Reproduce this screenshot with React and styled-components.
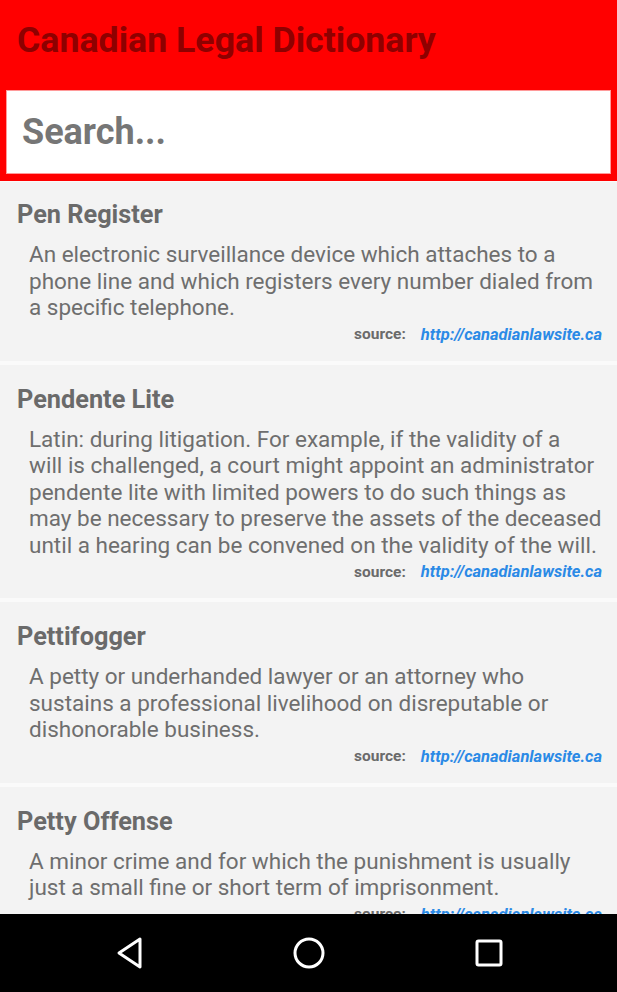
import React from 'react'
import styled, { createGlobalStyle } from 'styled-components'

const Global = createGlobalStyle`
  html, body {
    margin: 0;
    padding: 0;
    background: #fafafa;
    font-family: Roboto, "Noto Sans", "Liberation Sans", sans-serif;
  }
`

const Screen = styled.div`
  width: 617px;
  height: 992px;
  display: flex;
  flex-direction: column;
  overflow: hidden;
  background: #fafafa;
`

const Header = styled.header`
  background: #ff0000;
  padding: 0 6px 7px;
  flex: none;
`

const Title = styled.h1`
  margin: 0;
  height: 90px;
  padding: 0 0 10px 11px;
  box-sizing: border-box;
  display: flex;
  align-items: center;
  font-size: 35.7px;
  font-weight: 700;
  color: #8e0000;
`

const SearchBox = styled.div`
  height: 82px;
  background: #fff;
  border: 1px solid #ff9a9a;
  display: flex;
  align-items: center;
  padding-left: 15px;
  font-size: 36px;
  font-weight: 700;
  color: #767676;
`

const List = styled.main`
  flex: 1;
  overflow: hidden;
  display: flex;
  flex-direction: column;
  gap: 4px;
  padding-top: 1px;
`

const Card = styled.section`
  background: #f3f3f3;
  padding: 21px 14px 13px 17px;
  flex: none;

  &:first-child {
    padding-top: 19px;
  }
`

const Term = styled.h2`
  margin: 0 0 12px;
  font-size: 25.3px;
  line-height: 28px;
  font-weight: 700;
  color: #6a6a6a;
`

const Definition = styled.p`
  margin: 0 0 0 12px;
  font-size: 22.5px;
  line-height: 26.5px;
  color: #6e6e6e;
  white-space: pre-line;
`

const SourceRow = styled.div`
  display: flex;
  justify-content: flex-end;
  align-items: center;
  gap: 15px;
  height: 27px;
  padding-right: 1px;
  font-weight: 700;
`

const SourceLabel = styled.span`
  color: #6a6a6a;
  font-size: 15.5px;
`

const SourceLink = styled.a`
  color: #2b8ae6;
  font-size: 16.5px;
  font-style: italic;
  text-decoration: none;
`

const NavBar = styled.nav`
  flex: none;
  height: 78px;
  background: #000;
  display: grid;
  grid-template-columns: repeat(3, 50px);
  column-gap: 130px;
  justify-content: center;
  align-items: center;
  justify-items: center;
`

const entries = [
  {
    term: 'Pen Register',
    text: 'An electronic surveillance device which attaches to a phone line and which registers every number dialed from a specific telephone.',
  },
  {
    term: 'Pendente Lite',
    text: 'Latin: during litigation. For example, if the validity of a\nwill is challenged, a court might appoint an administrator pendente lite with limited powers to do such things as may be necessary to preserve the assets of the deceased until a hearing can be convened on the validity of the will.',
  },
  {
    term: 'Pettifogger',
    text: 'A petty or underhanded lawyer or an attorney who sustains a professional livelihood on disreputable or dishonorable business.',
  },
  {
    term: 'Petty Offense',
    text: 'A minor crime and for which the punishment is usually just a small fine or short term of imprisonment.',
  },
]

export default function App() {
  return (
    <>
      <Global />
      <Screen>
        <Header>
          <Title>Canadian Legal Dictionary</Title>
          <SearchBox>Search...</SearchBox>
        </Header>
        <List>
          {entries.map((e) => (
            <Card key={e.term}>
              <Term>{e.term}</Term>
              <Definition>{e.text}</Definition>
              <SourceRow>
                <SourceLabel>source:</SourceLabel>
                <SourceLink href="#">http://canadianlawsite.ca</SourceLink>
              </SourceRow>
            </Card>
          ))}
        </List>
        <NavBar>
          <svg width="30" height="34" viewBox="0 0 30 34">
            <path d="M26 3 L5 17 L26 31 Z" fill="none" stroke="#fff" strokeWidth="3" strokeLinejoin="round" />
          </svg>
          <svg width="34" height="34" viewBox="0 0 34 34">
            <circle cx="17" cy="17" r="14" fill="none" stroke="#fff" strokeWidth="3" />
          </svg>
          <svg width="30" height="30" viewBox="0 0 30 30">
            <rect x="3" y="3" width="24" height="24" rx="1.5" fill="none" stroke="#fff" strokeWidth="3" />
          </svg>
        </NavBar>
      </Screen>
    </>
  )
}
